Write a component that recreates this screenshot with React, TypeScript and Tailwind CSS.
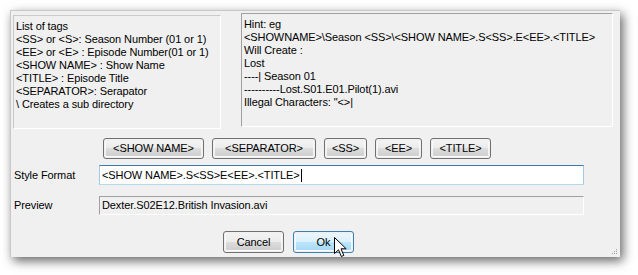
import React from "react";

const font = { fontFamily: '"Liberation Sans", Arial, sans-serif' };

const tagButtons = [
  { label: "<SHOW NAME>", w: "w-[101px]" },
  { label: "<SEPARATOR>", w: "w-[104px]" },
  { label: "<SS>", w: "w-[43px]" },
  { label: "<EE>", w: "w-[47px]" },
  { label: "<TITLE>", w: "w-[61px]" },
];

function WinButton({
  label,
  className,
  primary,
}: {
  label: string;
  className?: string;
  primary?: boolean;
}) {
  return (
    <div
      className={
        "rounded-[3px] border p-px " +
        (primary ? "border-[#3c7fb1] " : "border-[#707070] ") +
        (className ?? "")
      }
    >
      <div
        className={
          "flex h-full items-center justify-center rounded-[2px] border border-white/70 text-[11px] leading-none text-black " +
          (primary
            ? "bg-[linear-gradient(to_bottom,#eaf6fd_0%,#d9f0fc_50%,#bee6fd_50%,#a7d9f5_100%)]"
            : "bg-[linear-gradient(to_bottom,#f2f2f2_0%,#ebebeb_50%,#dddddd_50%,#cfcfcf_100%)]")
        }
      >
        {label}
      </div>
    </div>
  );
}

function Cursor() {
  return (
    <svg
      className="absolute left-[323px] top-[226px]"
      width="14"
      height="22"
      viewBox="0 0 14 22"
    >
      <path
        d="M0.5 0.5 L0.5 16.5 L4.5 12.8 L7.3 19.5 L9.8 18.4 L7 11.8 L12.2 11.8 Z"
        fill="white"
        stroke="black"
        strokeWidth="1"
        strokeLinejoin="miter"
      />
    </svg>
  );
}

export default function App() {
  return (
    <div className="h-[275px] w-[638px] overflow-hidden bg-white pl-[10px] pt-[10px]" style={font}>
      <div className="relative h-[247px] w-[610px] border-l border-t border-[#c8c8c8] bg-[#f0f0f0] text-[11px] tracking-[-0.1px] text-black shadow-[3px_4px_10px_rgba(0,0,0,0.6)]">
        <div className="flex items-start">
          <div className="ml-[2px] mt-[4px] h-[114px] w-[208px] border border-b-white border-l-[#c9c9c9] border-r-white border-t-[#c9c9c9] pl-[2px] pt-[4px] leading-[13px]">
            <div>List of tags</div>
            <div>{"<SS> or <S>: Season Number (01 or 1)"}</div>
            <div>{"<EE> or <E> : Episode Number(01 or 1)"}</div>
            <div>{"<SHOW NAME> : Show Name"}</div>
            <div>{"<TITLE> : Episode Title"}</div>
            <div>{"<SEPARATOR>: Serapator"}</div>
            <div>{"\\ Creates a sub directory"}</div>
          </div>
          <div className="ml-[20px] mt-[2px] h-[114px] w-[372px] border border-b-white border-l-[#a0a0a0] border-r-white border-t-[#a0a0a0] pl-[2px] pt-[4px] leading-[13px]">
            <div>Hint: eg</div>
            <div>{"<SHOWNAME>\\Season <SS>\\<SHOW NAME>.S<SS>.E<EE>.<TITLE>"}</div>
            <div>Will Create :</div>
            <div>Lost</div>
            <div>----| Season 01</div>
            <div>----------Lost.S01.E01.Pilot(1).avi</div>
            <div>{'Illegal Characters: "<>|'}</div>
          </div>
        </div>

        <div className="ml-[92px] mt-[9px] flex h-[21px] gap-[8px]">
          {tagButtons.map((b) => (
            <WinButton key={b.label} label={b.label} className={b.w} />
          ))}
        </div>

        <div className="mt-[6px] flex h-[20px] items-center">
          <div className="w-[88px] pl-[3px]">Style Format</div>
          <div className="flex h-[20px] w-[485px] items-center border border-b-[#b7d9ed] border-l-[#a4c9e3] border-r-[#a4c9e3] border-t-[#3d7bad] bg-white pl-[2px]">
            <span>{"<SHOW NAME>.S<SS>E<EE>.<TITLE>"}</span>
            <span className="ml-px inline-block h-[13px] w-px bg-black" />
          </div>
        </div>

        <div className="mt-[11px] flex h-[19px] items-center">
          <div className="w-[88px] pl-[3px]">Preview</div>
          <div className="flex h-[19px] w-[485px] items-center border border-b-white border-l-[#a0a0a0] border-r-white border-t-[#a0a0a0] pl-[2px]">
            Dexter.S02E12.British Invasion.avi
          </div>
        </div>

        <div className="ml-[212px] mt-[16px] flex h-[22px] gap-[9px]">
          <WinButton label="Cancel" className="w-[61px]" />
          <WinButton label="Ok" className="w-[61px]" primary />
        </div>

        <Cursor />

        <svg className="absolute bottom-[2px] right-[2px]" width="6" height="6" viewBox="0 0 6 6">
          <rect x="4" y="0" width="1" height="1" fill="#a0a0a0" />
          <rect x="2" y="2" width="1" height="1" fill="#a0a0a0" />
          <rect x="4" y="2" width="1" height="1" fill="#a0a0a0" />
          <rect x="0" y="4" width="1" height="1" fill="#a0a0a0" />
          <rect x="2" y="4" width="1" height="1" fill="#a0a0a0" />
          <rect x="4" y="4" width="1" height="1" fill="#a0a0a0" />
        </svg>
      </div>
    </div>
  );
}
